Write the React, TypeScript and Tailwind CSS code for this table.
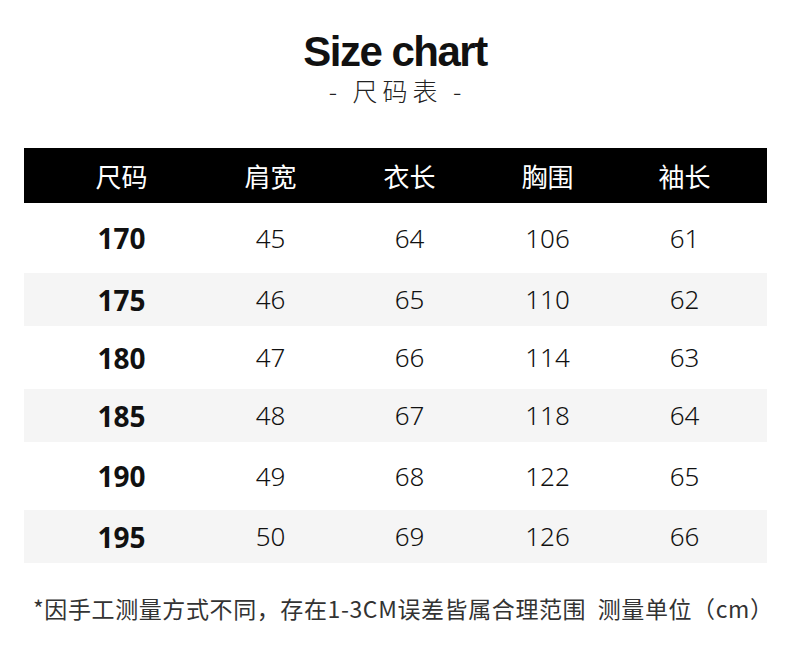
import React from "react";

const rows = [
  { h: "h-[70px]", bg: "bg-white", v: ["170", "45", "64", "106", "61"] },
  { h: "h-[53px]", bg: "bg-[#f5f5f5]", v: ["175", "46", "65", "110", "62"] },
  { h: "h-[63px]", bg: "bg-white", v: ["180", "47", "66", "114", "63"] },
  { h: "h-[53px]", bg: "bg-[#f5f5f5]", v: ["185", "48", "67", "118", "64"] },
  { h: "h-[68px]", bg: "bg-white", v: ["190", "49", "68", "122", "65"] },
  { h: "h-[53px]", bg: "bg-[#f5f5f5]", v: ["195", "50", "69", "126", "66"] },
];

const headers = ["尺码", "肩宽", "衣长", "胸围", "袖长"];
const cellPos = ["ml-[48px]", "ml-[49px]", "ml-[39px]", "ml-[38px]", "ml-[37px]"];

export default function App() {
  return (
    <div
      className="w-[790px] h-[661px] bg-white flex flex-col items-center"
      style={{ fontFamily: '"Noto Sans", "Noto Sans CJK SC", sans-serif' }}
    >
      <div
        className="mt-[32px] h-[40px] text-[42px] leading-[40px] font-bold tracking-[-1.5px] text-[#111]"
        style={{ fontFamily: '"Liberation Sans", Arial, sans-serif' }}
      >
        Size chart
      </div>
      <div className="mt-[4px] h-[28px] text-[25px] leading-[28px] text-[#222] font-light tracking-[5px] pl-[5px] font-['Noto_Sans_CJK_SC',sans-serif]">
        - 尺码表 -
      </div>
      <div className="mt-[44px] w-[743px] flex flex-col">
        <div className="h-[55px] bg-black flex items-center text-white text-[26px] font-['Noto_Sans_CJK_SC',sans-serif] font-normal">
          {headers.map((t, i) => (
            <div key={t} className={`w-[100px] text-center ${cellPos[i]}`}>
              {t}
            </div>
          ))}
        </div>
        {rows.map((r) => (
          <div key={r.v[0]} className={`${r.h} ${r.bg} flex items-center text-[#111]`}>
            {r.v.map((t, i) => (
              <div
                key={i}
                className={`w-[100px] text-center ${cellPos[i]} ${
                  i === 0 ? "text-[28px] font-bold" : "text-[26px] font-light"
                }`}
                style={{ fontFamily: i === 0 ? '"Open Sans", "Noto Sans", sans-serif' : '"Noto Sans", sans-serif' }}
              >
                {t}
              </div>
            ))}
          </div>
        ))}
      </div>
      <div className="mt-[29px] w-[790px] pl-[33px] text-[23px] leading-[32px] text-[#333] tracking-[0.6px] whitespace-nowrap font-['Noto_Sans_CJK_SC',sans-serif]">
        *因手工测量方式不同，存在1-3CM误差皆属合理范围&nbsp;&nbsp;测量单位（cm）
      </div>
    </div>
  );
}
